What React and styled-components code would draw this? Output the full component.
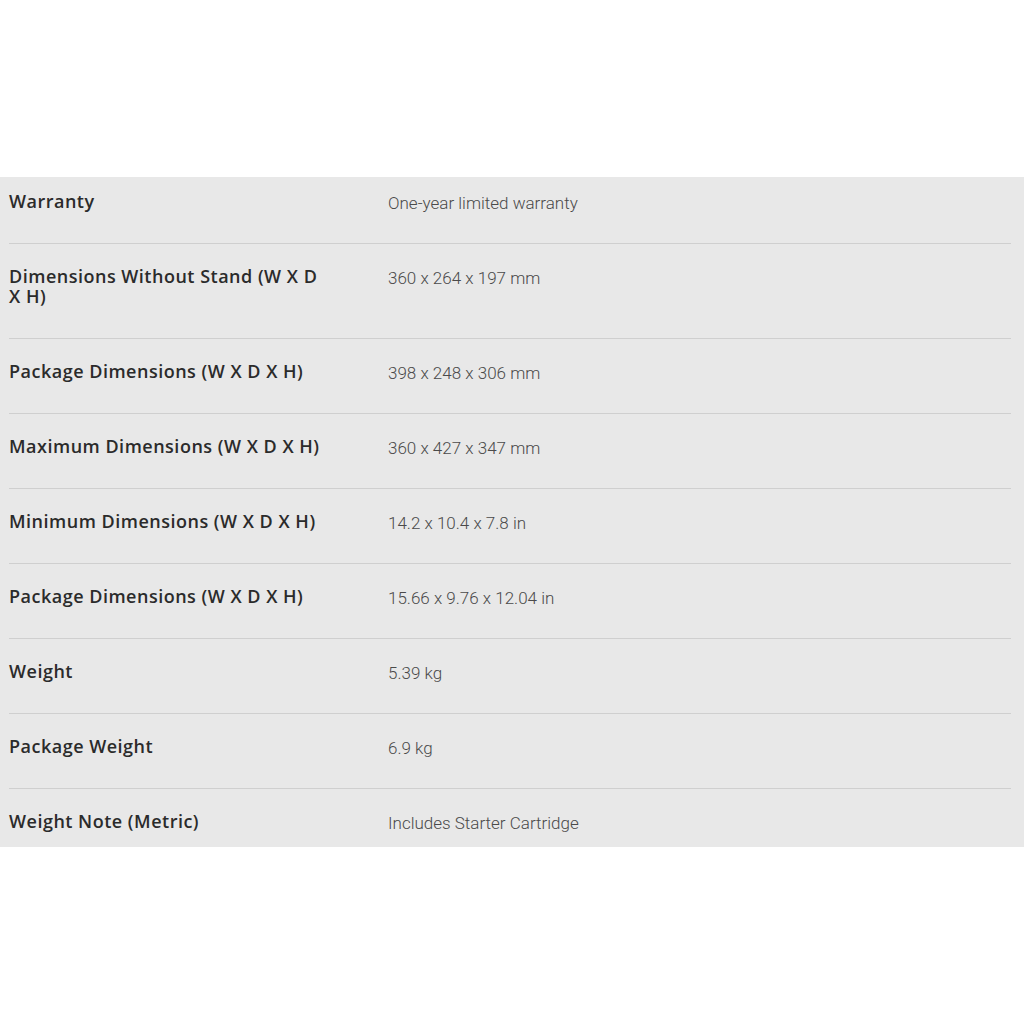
import React from 'react'
import styled, { createGlobalStyle } from 'styled-components'

const specs = [
    { label: 'Warranty', value: 'One-year limited warranty' },
    { label: 'Dimensions Without Stand (W X D X H)', value: '360 x 264 x 197 mm' },
    { label: 'Package Dimensions (W X D X H)', value: '398 x 248 x 306 mm' },
    { label: 'Maximum Dimensions (W X D X H)', value: '360 x 427 x 347 mm' },
    { label: 'Minimum Dimensions (W X D X H)', value: '14.2 x 10.4 x 7.8 in' },
    { label: 'Package Dimensions (W X D X H)', value: '15.66 x 9.76 x 12.04 in' },
    { label: 'Weight', value: '5.39 kg' },
    { label: 'Package Weight', value: '6.9 kg' },
    { label: 'Weight Note (Metric)', value: 'Includes Starter Cartridge' },
]

function App() {
    return (
        <>
            <GlobalStyle />
            <Page>
                <SpecPanel>
                    <SpecList>
                        {specs.map((spec, index) => (
                            <SpecRow key={index}>
                                <Label>{spec.label}</Label>
                                <Value>{spec.value}</Value>
                            </SpecRow>
                        ))}
                    </SpecList>
                </SpecPanel>
            </Page>
        </>
    )
}

const GlobalStyle = createGlobalStyle`
    body {
        margin: 0;
        background: #ffffff;
        font-family: "Open Sans", sans-serif;
    }
`

const Page = styled.div`
    padding-top: 177px;
    width: 1024px;
    height: 1024px;
    box-sizing: border-box;
`

const SpecPanel = styled.section`
    background-color: #e8e8e8;
    padding: 14px 13px 16px 9px;
`

const SpecList = styled.div`
    display: flex;
    flex-direction: column;
`

const SpecRow = styled.div`
    display: grid;
    grid-template-columns: 379px 1fr;
    padding: 22px 0 32px;
    border-top: 1px solid #cfcfcf;
    &:first-child {
        border-top: none;
        padding-top: 0;
    }
    &:last-child {
        padding-bottom: 0;
    }
`

const Label = styled.div`
    font-family: "Open Sans", sans-serif;
    font-weight: 600;
    font-size: 18px;
    letter-spacing: 0.5px;
    line-height: 20px;
    color: #2b2b2b;
    padding-right: 60px;
`

const Value = styled.div`
    font-family: Roboto, sans-serif;
    font-weight: 300;
    font-size: 17px;
    line-height: 20px;
    color: #4a4a4a;
    margin: 2px 0 -2px;
`

export default App
